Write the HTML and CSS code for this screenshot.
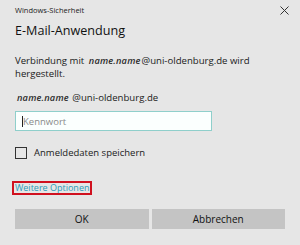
FILE: index.html
```html
<!DOCTYPE html>
<html lang="de">
<head>
<meta charset="utf-8">
<link rel="stylesheet" href="styles.css">
</head>
<body>
<div class="dialog">
  <div class="titlebar">
    <span class="app">Windows-Sicherheit</span>
    <span class="close">
      <svg width="9" height="9" viewBox="0 0 9 9"><path d="M0.5 0.5L8.5 8.5M8.5 0.5L0.5 8.5" stroke="#333" stroke-width="1"/></svg>
    </span>
  </div>
  <h1 class="heading">E-Mail-Anwendung</h1>
  <p class="msg"><span class="line">Verbindung mit <span class="redact">name.name</span>@uni-oldenburg.de wird</span><span class="line">hergestellt.</span></p>
  <p class="user"><span class="redact">name.name</span> @uni-oldenburg.de</p>
  <div class="field"><span class="caret"></span><span class="ph">Kennwort</span></div>
  <label class="check"><span class="box"></span><span>Anmeldedaten speichern</span></label>
  <div class="more"><span class="link">Weitere Optionen</span></div>
  <div class="buttons">
    <span class="btn">OK</span>
    <span class="btn">Abbrechen</span>
  </div>
</div>
</body>
</html>
```
FILE: styles.css
```css
html, body {
  margin: 0;
  padding: 0;
  background: #e6e6e6;
}
.dialog {
  width: 300px;
  height: 245px;
  box-sizing: border-box;
  padding: 0 15px;
  font-family: "Open Sans", "Noto Sans", sans-serif;
  color: #1a1a1a;
  display: flex;
  flex-direction: column;
}
.titlebar {
  height: 20px;
  display: flex;
  align-items: center;
  justify-content: space-between;
}
.app {
  font-size: 7.5px;
  color: #222;
}
.close {
  display: flex;
  margin-right: -4px;
}
.heading {
  margin: 0;
  font-weight: normal;
  font-size: 12.6px;
  line-height: 22px;
  color: #111;
}
.msg {
  margin: 12px 0 0;
  font-size: 9.6px;
  line-height: 13px;
}
.line {
  display: block;
  white-space: nowrap;
}
.redact {
  display: inline-block;
  font-style: italic;
  font-weight: 600;
  font-size: 9.2px;
  line-height: 13px;
  letter-spacing: 0.2px;
  color: #2a2a2a;
  padding-right: 1px;
}
.msg .redact {
  margin-left: 2px;
}
.user {
  margin: 11px 0 0;
  font-size: 9.6px;
  line-height: 13px;
}
.user .redact {
  margin-left: 2px;
}
.field {
  margin-top: 7px;
  width: 197px;
  height: 20px;
  box-sizing: border-box;
  border: 1px solid #8fcfcb;
  background: #fbfffe;
  display: flex;
  align-items: center;
  padding-left: 6px;
  font-size: 9.5px;
  color: #8a8a8a;
}
.caret {
  width: 1px;
  height: 11px;
  background: #222;
}
.check {
  margin-top: 15px;
  display: flex;
  align-items: center;
  gap: 7px;
  font-size: 9.5px;
  color: #1a1a1a;
}
.box {
  width: 12px;
  height: 12px;
  box-sizing: border-box;
  border: 1px solid #333;
}
.more {
  margin-top: 22px;
  display: flex;
}
.link {
  margin-left: -3px;
  border: 2px solid #d0111f;
  padding: 0 1px;
  font-size: 9px;
  line-height: 10px;
  height: 10px;
  color: #2b9bb8;
}
.buttons {
  margin-top: 14px;
  display: flex;
  gap: 3px;
}
.btn {
  flex: 1;
  height: 20px;
  background: #c4c4c4;
  display: flex;
  align-items: center;
  justify-content: center;
  font-size: 10px;
  color: #111;
}
```
